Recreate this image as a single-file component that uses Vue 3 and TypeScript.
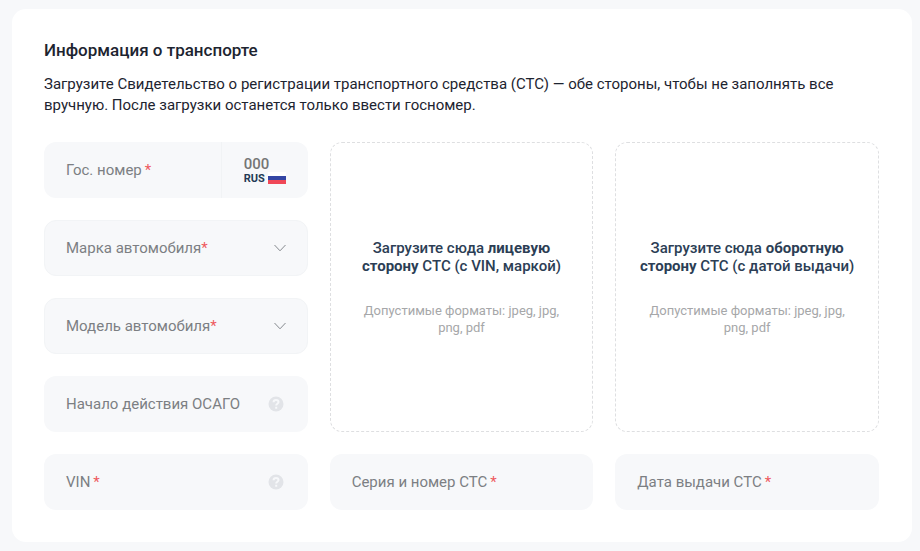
<script setup lang="ts">
import { reactive } from 'vue'

interface Field {
  id: string
  label: string
  required?: 'spaced' | 'tight'
  kind: 'text' | 'select' | 'plate'
  hint?: string
  options?: string[]
}

interface Upload {
  id: string
  side: string
  rest: string
}

const sideFields: Field[] = [
  { id: 'plate', label: 'Гос. номер', required: 'spaced', kind: 'plate' },
  { id: 'brand', label: 'Марка автомобиля', required: 'tight', kind: 'select', options: ['Lada', 'Kia', 'Toyota'] },
  { id: 'model', label: 'Модель автомобиля', required: 'tight', kind: 'select', options: ['Vesta', 'Rio', 'Camry'] },
  { id: 'start', label: 'Начало действия ОСАГО', kind: 'text', hint: 'Начало действия ОСАГО' },
  { id: 'vin', label: 'VIN', required: 'spaced', kind: 'text', hint: 'VIN' },
]

const bottomFields: Field[] = [
  { id: 'sts', label: 'Серия и номер СТС', required: 'spaced', kind: 'text' },
  { id: 'issued', label: 'Дата выдачи СТС', required: 'spaced', kind: 'text' },
]

const uploads: Upload[] = [
  { id: 'front', side: 'лицевую сторону', rest: 'СТС (с VIN, маркой)' },
  { id: 'back', side: 'оборотную сторону', rest: 'СТС (с датой выдачи)' },
]

const fields: Field[] = [...sideFields, ...bottomFields]
const values = reactive<Record<string, string>>({
  plate: '', region: '', brand: '', model: '', start: '', vin: '', sts: '', issued: '',
})
</script>

<template>
  <main class="page">
    <form class="card" @submit.prevent>
      <h1 class="title">Информация о транспорте</h1>
      <p class="lead">
        Загрузите Свидетельство о регистрации транспортного средства (СТС) — обе стороны, чтобы не заполнять все
        вручную. После загрузки останется только ввести госномер.
      </p>

      <div class="grid">
        <label v-for="u in uploads" :key="u.id" class="upload" :class="u.id">
          <input class="file" type="file" accept=".jpeg,.jpg,.png,.pdf" />
          <span class="upload-title">Загрузите сюда <b>{{ u.side }}</b> {{ u.rest }}</span>
          <span class="formats">Допустимые форматы: jpeg, jpg, png, pdf</span>
        </label>

        <div v-for="f in fields" :key="f.id" class="field" :class="[f.kind, f.id]">
          <div class="control">
            <select v-if="f.kind === 'select'" :id="f.id" v-model="values[f.id]" class="input">
              <option value=""></option>
              <option v-for="o in f.options" :key="o">{{ o }}</option>
            </select>
            <input v-else :id="f.id" v-model="values[f.id]" class="input" type="text" />
            <label v-show="!values[f.id]" class="label" :for="f.id">{{ f.label
              }}<span v-if="f.required" class="star" :class="f.required">*</span></label>
            <svg v-if="f.kind === 'select'" class="chevron" viewBox="0 0 14 8" aria-hidden="true">
              <path d="M1.5 1L7 6.8 12.5 1" />
            </svg>
            <button v-if="f.hint" class="hint" type="button" :aria-label="f.hint">
              <svg viewBox="0 0 16 16" aria-hidden="true">
                <circle cx="8" cy="8" r="7.5" />
                <path d="M5.6 6.2C5.6 4.7 6.6 3.9 8 3.9s2.5.8 2.5 2.1c0 1.7-2.3 1.7-2.3 3.4" />
                <path d="M8.2 10.8v2" />
              </svg>
            </button>
          </div>
          <div v-if="f.kind === 'plate'" class="region">
            <input v-model="values.region" class="region-input" type="text" placeholder="000" maxlength="3" aria-label="Регион" />
            <span class="country">
              RUS
              <svg class="flag" viewBox="0 0 18 12" aria-hidden="true">
                <rect width="18" height="4" fill="#fff" />
                <rect y="4" width="18" height="4" fill="#3446a4" />
                <rect y="8" width="18" height="4" fill="#f04757" />
              </svg>
            </span>
          </div>
        </div>
      </div>
    </form>
  </main>
</template>

<style>
body {
  background: #f7f8fa;
}
</style>

<style scoped>
.page {
  padding: 9px 8px 9px 12px;
  font-family: Roboto, "Liberation Sans", sans-serif;
  color: #1d2430;
}
.card {
  padding: 31px 33px 32px 32px;
  border-radius: 14px;
  background: #fff;
}
.title {
  margin: 0;
  font-size: 17px;
  line-height: 20px;
  font-weight: 500;
}
.lead {
  margin: 14px 0 26px;
  font-size: 15px;
  line-height: 21px;
}
.grid {
  display: grid;
  grid-template-columns: repeat(3, minmax(0, 1fr));
  grid-auto-rows: 56px;
  gap: 22px;
}
.plate { grid-area: 1 / 1; }
.brand { grid-area: 2 / 1; }
.model { grid-area: 3 / 1; }
.start { grid-area: 4 / 1; }
.vin { grid-area: 5 / 1; }
.sts { grid-area: 5 / 2; }
.issued { grid-area: 5 / 3; }
.front { grid-area: 1 / 2 / span 4; }
.back { grid-area: 1 / 3 / span 4; }

.field {
  display: flex;
  overflow: hidden;
  border-radius: 12px;
  background: #f7f8fa;
}
.field.select {
  border: 1px solid #f2f4f6;
}
.field.select .control {
  margin: -1px;
}
.control {
  flex: 1;
  min-width: 0;
  display: grid;
  align-items: center;
}
.control > * {
  grid-area: 1 / 1;
}
.input {
  width: 100%;
  height: 100%;
  box-sizing: border-box;
  margin: 0;
  padding: 0 22px;
  border: 0;
  outline: none;
  appearance: none;
  background: transparent;
  font: inherit;
  font-size: 15px;
  color: #1d2430;
}
.label {
  padding-left: 22px;
  pointer-events: none;
  font-size: 15px;
  line-height: 20px;
  white-space: nowrap;
  color: #7c7f83;
}
.star {
  color: #ee5a5f;
}
.star.spaced {
  margin-left: 3px;
}
.chevron {
  justify-self: end;
  width: 14px;
  height: 8px;
  margin-right: 21px;
  pointer-events: none;
  fill: none;
  stroke: #85898e;
  stroke-width: 1;
}
.hint {
  justify-self: end;
  display: flex;
  margin-right: 24px;
  padding: 0;
  border: 0;
  background: none;
  cursor: pointer;
}
.hint svg {
  width: 16px;
  height: 16px;
  fill: none;
  stroke: #f7f8fa;
  stroke-width: 2;
}
.hint circle {
  fill: #e2e4e8;
  stroke: none;
}
.region {
  width: 64px;
  display: flex;
  flex-direction: column;
  justify-content: center;
  padding-left: 22px;
  border-left: 1px solid #f1f3f5;
}
.region-input {
  width: 42px;
  height: 16px;
  padding: 0;
  border: 0;
  outline: none;
  background: transparent;
  font: inherit;
  font-size: 15px;
  font-weight: 500;
  line-height: 16px;
  color: #1d2430;
}
.region-input::placeholder {
  color: #757575;
  opacity: 1;
}
.country {
  display: flex;
  align-items: center;
  gap: 3px;
  font-size: 11px;
  line-height: 13px;
  font-weight: 700;
  color: #243a55;
}
.flag {
  width: 18px;
  height: 12px;
}
.upload {
  display: flex;
  flex-direction: column;
  align-items: center;
  justify-content: center;
  gap: 27px;
  padding: 0 22px;
  border: 1px dashed #dedfe1;
  border-radius: 12px;
  text-align: center;
  cursor: pointer;
}
.file {
  position: absolute;
  width: 1px;
  height: 1px;
  opacity: 0;
}
.upload-title {
  font-size: 15px;
  line-height: 18px;
  font-weight: 500;
  color: #2c3e55;
}
.upload-title b {
  font-weight: 700;
}
.formats {
  max-width: 210px;
  font-size: 13px;
  line-height: 17px;
  color: #a6a7a9;
}
</style>
